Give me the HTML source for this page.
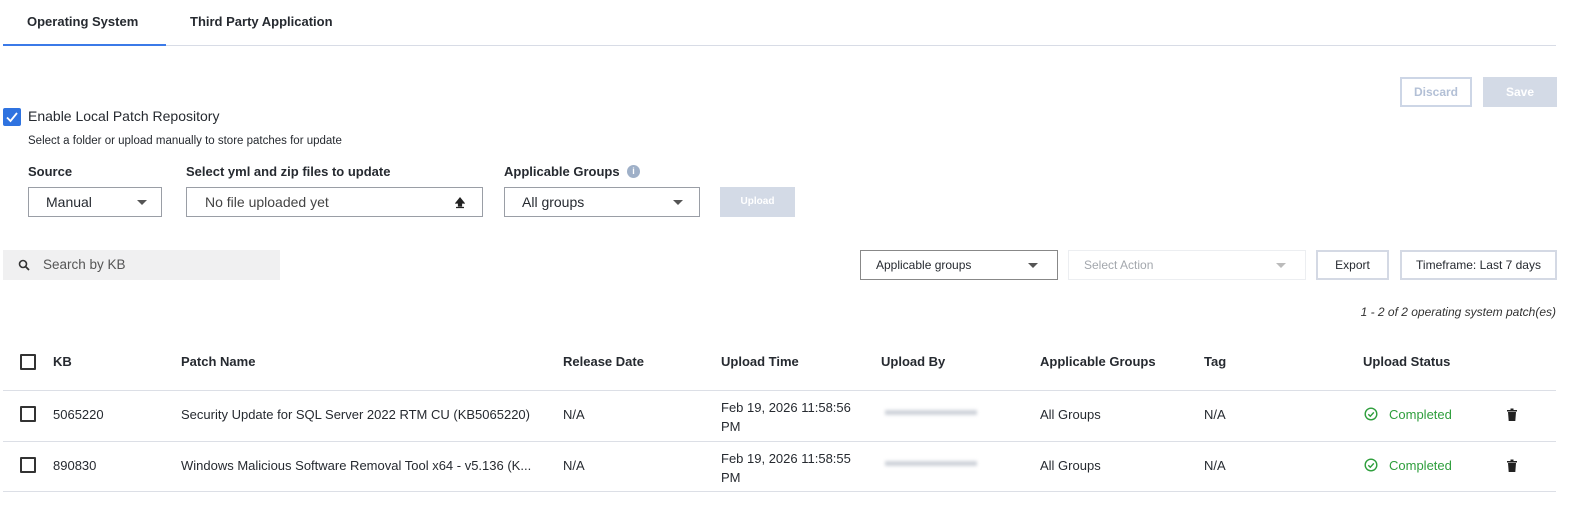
<!DOCTYPE html>
<html><head><meta charset="utf-8"><style>
*{box-sizing:border-box;margin:0;padding:0}
body{width:1584px;height:508px;background:#fff;font-family:"Liberation Sans",sans-serif;color:#262a30;position:relative;overflow:hidden;font-size:13px}
.a{position:absolute;white-space:nowrap}
.b{font-weight:bold}
.box{position:absolute;border:1px solid #9a9ea6;background:#fff}
.tri{position:absolute;width:0;height:0;border-left:5px solid transparent;border-right:5px solid transparent;border-top:5px solid #555}
.hr{position:absolute;left:3px;width:1553px;height:1px;background:#dcdfe6}
.cb{position:absolute;width:16px;height:16px;border:2px solid #333;border-radius:1px}
</style></head><body>
<div class="a b" style="left:27px;top:14px;font-size:13px">Operating System</div>
<div class="a b" style="left:190px;top:14px;font-size:13px">Third Party Application</div>
<div class="a" style="left:3px;top:45px;width:1553px;height:1px;background:#d8dce6"></div>
<div class="a" style="left:3px;top:44px;width:163px;height:2px;background:#3b7ae8"></div>

<div class="a" style="left:1400px;top:77px;width:72px;height:30px;border:2px solid #cdd6e6;color:#b3c0d6;text-align:center;line-height:26px;font-weight:bold;font-size:12px">Discard</div>
<div class="a" style="left:1483px;top:77px;width:74px;height:30px;background:#d3dae6;color:#fff;text-align:center;line-height:30px;font-weight:bold;font-size:12px">Save</div>

<div class="a" style="left:3px;top:108px;width:18px;height:18px;background:#2f73e0;border-radius:2px"><svg width="18" height="18"><path d="M4 9.5l3.5 3.5L14 5" stroke="#fff" stroke-width="1.8" fill="none"/></svg></div>
<div class="a" style="left:28px;top:108px;font-size:14px">Enable Local Patch Repository</div>
<div class="a" style="left:28px;top:135px;font-size:11.5px">Select a folder or upload manually to store patches for update</div>

<div class="a b" style="left:28px;top:164px">Source</div>
<div class="a b" style="left:186px;top:164px">Select yml and zip files to update</div>
<div class="a b" style="left:504px;top:164px">Applicable Groups</div>
<div class="a" style="left:627px;top:165px;width:13px;height:13px;border-radius:50%;background:#9fb0c8;color:#fff;font-size:9px;text-align:center;line-height:13px;font-weight:bold">i</div>

<div class="box" style="left:28px;top:187px;width:134px;height:30px"></div>
<div class="a" style="left:46px;top:194px;font-size:14px">Manual</div>
<div class="tri" style="left:137px;top:200px"></div>
<div class="box" style="left:186px;top:187px;width:297px;height:30px"></div>
<div class="a" style="left:205px;top:194px;font-size:14px;color:#444">No file uploaded yet</div>
<svg class="a" style="left:455px;top:197px" width="10" height="12"><path d="M5 1L1 6h2.5v3h3V6H9z M1 10.5h8" fill="#222" stroke="#222" stroke-width="1.2"/></svg>
<div class="box" style="left:504px;top:187px;width:196px;height:30px"></div>
<div class="a" style="left:522px;top:194px;font-size:14px">All groups</div>
<div class="tri" style="left:673px;top:200px"></div>
<div class="a" style="left:720px;top:187px;width:75px;height:30px;background:#d3dae6;color:#fff;font-size:10px;font-weight:bold;text-align:center;line-height:30px">Upload</div>

<div class="a" style="left:3px;top:250px;width:277px;height:30px;background:#f0f0f1"></div>
<svg class="a" style="left:18px;top:259px" width="12" height="12"><circle cx="5" cy="5" r="3.5" stroke="#333" stroke-width="1.6" fill="none"/><path d="M7.5 7.5L11 11" stroke="#333" stroke-width="1.8"/></svg>
<div class="a" style="left:43px;top:257px;font-size:13.5px;color:#555">Search by KB</div>

<div class="box" style="left:860px;top:250px;width:198px;height:30px;border-color:#888"></div>
<div class="a" style="left:876px;top:258px;font-size:12px">Applicable groups</div>
<div class="tri" style="left:1028px;top:263px"></div>
<div class="box" style="left:1068px;top:250px;width:238px;height:30px;border-color:#eceef1"></div>
<div class="a" style="left:1084px;top:258px;font-size:12px;color:#a3a7ad">Select Action</div>
<div class="tri" style="left:1276px;top:263px;border-top-color:#bbb"></div>
<div class="a" style="left:1316px;top:250px;width:73px;height:30px;border:2px solid #d4d9e4;text-align:center;line-height:26px;font-size:12px">Export</div>
<div class="a" style="left:1400px;top:250px;width:157px;height:30px;border:2px solid #d4d9e4;text-align:center;line-height:26px;font-size:12px">Timeframe: Last 7 days</div>
<div class="a" style="right:28px;top:305px;font-size:12px;font-style:italic;color:#333">1 - 2 of 2 operating system patch(es)</div>

<div class="cb" style="left:20px;top:354px"></div>
<div class="a b" style="left:53px;top:354px">KB</div>
<div class="a b" style="left:181px;top:354px">Patch Name</div>
<div class="a b" style="left:563px;top:354px">Release Date</div>
<div class="a b" style="left:721px;top:354px">Upload Time</div>
<div class="a b" style="left:881px;top:354px">Upload By</div>
<div class="a b" style="left:1040px;top:354px">Applicable Groups</div>
<div class="a b" style="left:1204px;top:354px">Tag</div>
<div class="a b" style="left:1363px;top:354px">Upload Status</div>
<div class="hr" style="top:390px"></div>

<div class="cb" style="left:20px;top:406px"></div>
<div class="a" style="left:53px;top:407px">5065220</div>
<div class="a" style="left:181px;top:407px">Security Update for SQL Server 2022 RTM CU (KB5065220)</div>
<div class="a" style="left:563px;top:407px">N/A</div>
<div class="a" style="left:721px;top:398px;line-height:19px">Feb 19, 2026 11:58:56<br>PM</div>
<div class="a" style="left:885px;top:410px;width:92px;height:5px;background:#cfd3da;filter:blur(1.5px)"></div>
<div class="a" style="left:1040px;top:407px">All Groups</div>
<div class="a" style="left:1204px;top:407px">N/A</div>
<svg class="a" style="left:1364px;top:407px" width="14" height="14"><circle cx="7" cy="7" r="5.8" stroke="#2e9e3c" stroke-width="1.4" fill="none"/><path d="M4.3 7.2l2 2 3.5-3.8" stroke="#2e9e3c" stroke-width="1.4" fill="none"/></svg>
<div class="a" style="left:1389px;top:407px;color:#2e9e3c">Completed</div>
<svg class="a" style="left:1507px;top:408px" width="10" height="13"><path d="M0 2h10v1.5H0z M3.5 0.5h3v1.5h-3z M1 4h8l-.7 9H1.7z" fill="#222"/></svg>
<div class="hr" style="top:441px"></div>

<div class="cb" style="left:20px;top:457px"></div>
<div class="a" style="left:53px;top:458px">890830</div>
<div class="a" style="left:181px;top:458px">Windows Malicious Software Removal Tool x64 - v5.136 (K...</div>
<div class="a" style="left:563px;top:458px">N/A</div>
<div class="a" style="left:721px;top:449px;line-height:19px">Feb 19, 2026 11:58:55<br>PM</div>
<div class="a" style="left:885px;top:461px;width:92px;height:5px;background:#cfd3da;filter:blur(1.5px)"></div>
<div class="a" style="left:1040px;top:458px">All Groups</div>
<div class="a" style="left:1204px;top:458px">N/A</div>
<svg class="a" style="left:1364px;top:458px" width="14" height="14"><circle cx="7" cy="7" r="5.8" stroke="#2e9e3c" stroke-width="1.4" fill="none"/><path d="M4.3 7.2l2 2 3.5-3.8" stroke="#2e9e3c" stroke-width="1.4" fill="none"/></svg>
<div class="a" style="left:1389px;top:458px;color:#2e9e3c">Completed</div>
<svg class="a" style="left:1507px;top:459px" width="10" height="13"><path d="M0 2h10v1.5H0z M3.5 0.5h3v1.5h-3z M1 4h8l-.7 9H1.7z" fill="#222"/></svg>
<div class="hr" style="top:491px"></div>
</body></html>
